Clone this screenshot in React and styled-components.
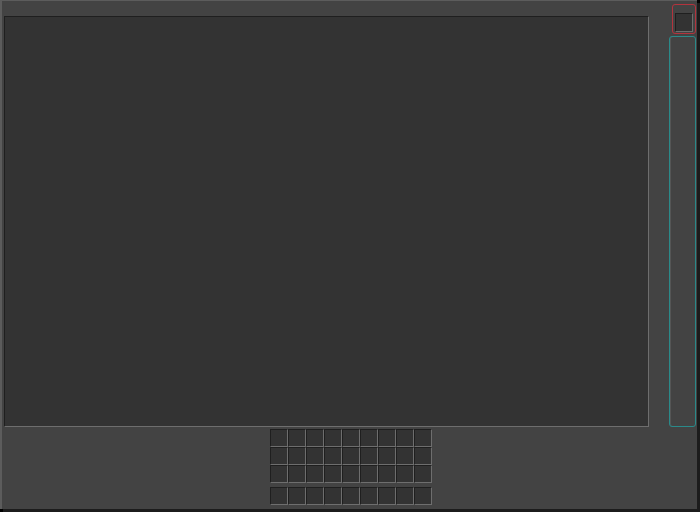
import React from "react";
import styled, { createGlobalStyle } from "styled-components";

const Global = createGlobalStyle`
  html, body { margin: 0; padding: 0; background: #000; width: 700px; height: 512px; overflow: hidden; }
  * { box-sizing: border-box; }
`;

const Window = styled.div`
  width: 697px;
  height: 509px;
  background: #434343;
  border-top: 1px solid #5c5c5c;
  border-left: 2px solid #5c5c5c;
  box-shadow: 3px 3px 0 #1c1c1c;
  padding: 3px 0 0 2px;
  display: flex;
  flex-direction: column;
`;

const MainRow = styled.div`
  display: flex;
  height: 423px;
`;

const Canvas = styled.div`
  margin-top: 12px;
  width: 645px;
  height: 411px;
  background: #333333;
  border-top: 1px solid #1f1f1f;
  border-left: 1px solid #1f1f1f;
  border-right: 1px solid #6e6e6e;
  border-bottom: 1px solid #6e6e6e;
`;

const Sidebar = styled.div`
  margin-left: 20px;
  width: 27px;
  display: flex;
  flex-direction: column;
  gap: 2px;
`;

const CloseButton = styled.div`
  align-self: flex-end;
  width: 24px;
  height: 30px;
  border: 1px solid #b3333d;
  border-radius: 3px;
  display: flex;
  align-items: flex-end;
  justify-content: center;
  padding-bottom: 1px;
`;

const Slot = styled.div`
  width: ${(p) => p.$w || 18}px;
  height: ${(p) => p.$h || 18}px;
  background: #333333;
  border-top: 1px solid #1f1f1f;
  border-left: 1px solid #1f1f1f;
  border-right: 1px solid #6e6e6e;
  border-bottom: 1px solid #6e6e6e;
`;

const ScrollTrack = styled.div`
  flex: 1;
  width: 27px;
  border: 1px solid #2a8a8a;
  border-radius: 3px;
  box-shadow: inset 1px 0 0 #555555;
`;

const Bottom = styled.div`
  flex: 1;
  display: flex;
  flex-direction: column;
  align-items: center;
  padding-top: 2px;
  padding-left: 1px;
  gap: 4px;
`;

const SlotGrid = styled.div`
  display: grid;
  grid-template-columns: repeat(9, 18px);
  grid-auto-rows: 18px;
`;

export default function App() {
  const main = Array.from({ length: 27 });
  const hotbar = Array.from({ length: 9 });
  return (
    <>
      <Global />
      <Window>
        <MainRow>
          <Canvas />
          <Sidebar>
            <CloseButton>
              <Slot $w={18} $h={19} />
            </CloseButton>
            <ScrollTrack />
          </Sidebar>
        </MainRow>
        <Bottom>
          <SlotGrid>
            {main.map((_, i) => (
              <Slot key={i} />
            ))}
          </SlotGrid>
          <SlotGrid>
            {hotbar.map((_, i) => (
              <Slot key={i} />
            ))}
          </SlotGrid>
        </Bottom>
      </Window>
    </>
  );
}
